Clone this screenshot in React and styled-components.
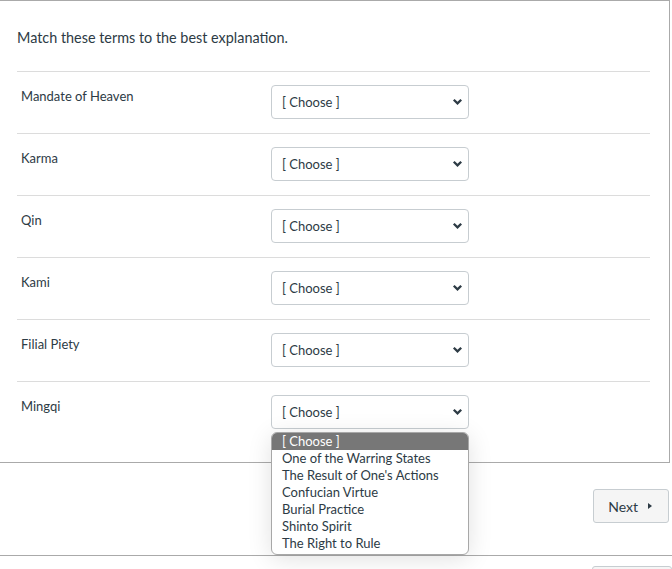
import React from 'react';
import styled, { createGlobalStyle } from 'styled-components';

const GlobalStyle = createGlobalStyle`
  body {
    margin: 0;
    background: #fff;
    font-family: Lato, "Open Sans", "Liberation Sans", sans-serif;
    color: #2d3b45;
  }
`

const Page = styled.div`
  width: 672px;
  height: 569px;
  overflow: hidden;
`

const QuestionPanel = styled.div`
  width: 670px;
  box-sizing: border-box;
  border-top: 1px solid #aaa;
  border-right: 1px solid #aaa;
  border-bottom: 1px solid #aaa;
  padding: 27px 0 19px 17px;
`

const Prompt = styled.p`
  margin: 0 0 23px;
  font-size: 14.4px;
  line-height: 20px;
`

const Rows = styled.div`
  width: 633px;
`

const Row = styled.div`
  display: flex;
  height: 62px;
  box-sizing: border-box;
  border-top: 1px solid #dcdcdc;
`

const Term = styled.div`
  width: 250px;
  padding: 15px 0 0 4px;
  font-size: 13px;
  line-height: 18px;
`

const SelectWrap = styled.div`
  position: relative;
  margin-top: 13px;
`

const SelectBox = styled.div`
  width: 198px;
  height: 34px;
  box-sizing: border-box;
  border: 1px solid #c7cdd1;
  border-radius: 4px;
  background: #fff;
  display: flex;
  align-items: center;
  justify-content: space-between;
  padding: 0 5px 0 10px;
  font-size: 13px;
`

const Options = styled.ul`
  position: absolute;
  top: 37px;
  left: 0;
  width: 198px;
  box-sizing: border-box;
  margin: 0;
  padding: 0 0 2px;
  list-style: none;
  background: #fff;
  border: 1px solid #a8a8a8;
  border-radius: 6px;
  overflow: hidden;
  box-shadow: 0 4px 24px rgba(0, 0, 0, 0.12);
  z-index: 2;
`

const Option = styled.li`
  height: 17px;
  line-height: 17px;
  padding-left: 10px;
  font-size: 13px;
  color: ${p => (p.$active ? '#fff' : '#2d3b45')};
  background: ${p => (p.$active ? '#777' : 'transparent')};
`

const Actions = styled.div`
  height: 93px;
  display: flex;
  justify-content: flex-end;
  align-items: flex-start;
  padding: 26px 3px 0 0;
  box-sizing: border-box;
  border-bottom: 1px solid #aaa;
`

const Button = styled.button`
  display: flex;
  align-items: center;
  gap: 9px;
  height: 34px;
  padding: 0 15px 0 14px;
  background: #f5f5f5;
  border: 1px solid #c7cdd1;
  border-radius: 3px;
  font-family: inherit;
  font-size: 14px;
  color: #2d3b45;
`

const Footer = styled.div`
  display: flex;
  justify-content: flex-end;
  padding-top: 10px;
`

const GhostButton = styled.div`
  width: 80px;
  height: 34px;
  box-sizing: border-box;
  border: 1px solid #c7cdd1;
  border-radius: 3px;
  background: #f5f5f5;
`

const Chevron = () => (
  <svg width="11" height="8" viewBox="0 0 11 8">
    <path d="M1.8 1.8 L5.5 5.4 L9.2 1.8" fill="none" stroke="#2d3b45" strokeWidth="2.3" />
  </svg>
)

const Caret = () => (
  <svg width="6" height="8" viewBox="0 0 6 8">
    <path d="M1 1 L5 4 L1 7 Z" fill="#2d3b45" />
  </svg>
)

const terms = ['Mandate of Heaven', 'Karma', 'Qin', 'Kami', 'Filial Piety', 'Mingqi']

const choices = [
  '[ Choose ]',
  'One of the Warring States',
  "The Result of One's Actions",
  'Confucian Virtue',
  'Burial Practice',
  'Shinto Spirit',
  'The Right to Rule',
]

const App = () => (
  <Page>
    <GlobalStyle />
    <QuestionPanel>
      <Prompt>Match these terms to the best explanation.</Prompt>
      <Rows>
        {terms.map((term, i) => (
          <Row key={term}>
            <Term>{term}</Term>
            <SelectWrap>
              <SelectBox>
                <span>[ Choose ]</span>
                <Chevron />
              </SelectBox>
              {i === terms.length - 1 && (
                <Options>
                  {choices.map((c, j) => (
                    <Option key={c} $active={j === 0}>{c}</Option>
                  ))}
                </Options>
              )}
            </SelectWrap>
          </Row>
        ))}
      </Rows>
    </QuestionPanel>
    <Actions>
      <Button>
        Next <Caret />
      </Button>
    </Actions>
    <Footer>
      <GhostButton />
    </Footer>
  </Page>
);

export default App;
